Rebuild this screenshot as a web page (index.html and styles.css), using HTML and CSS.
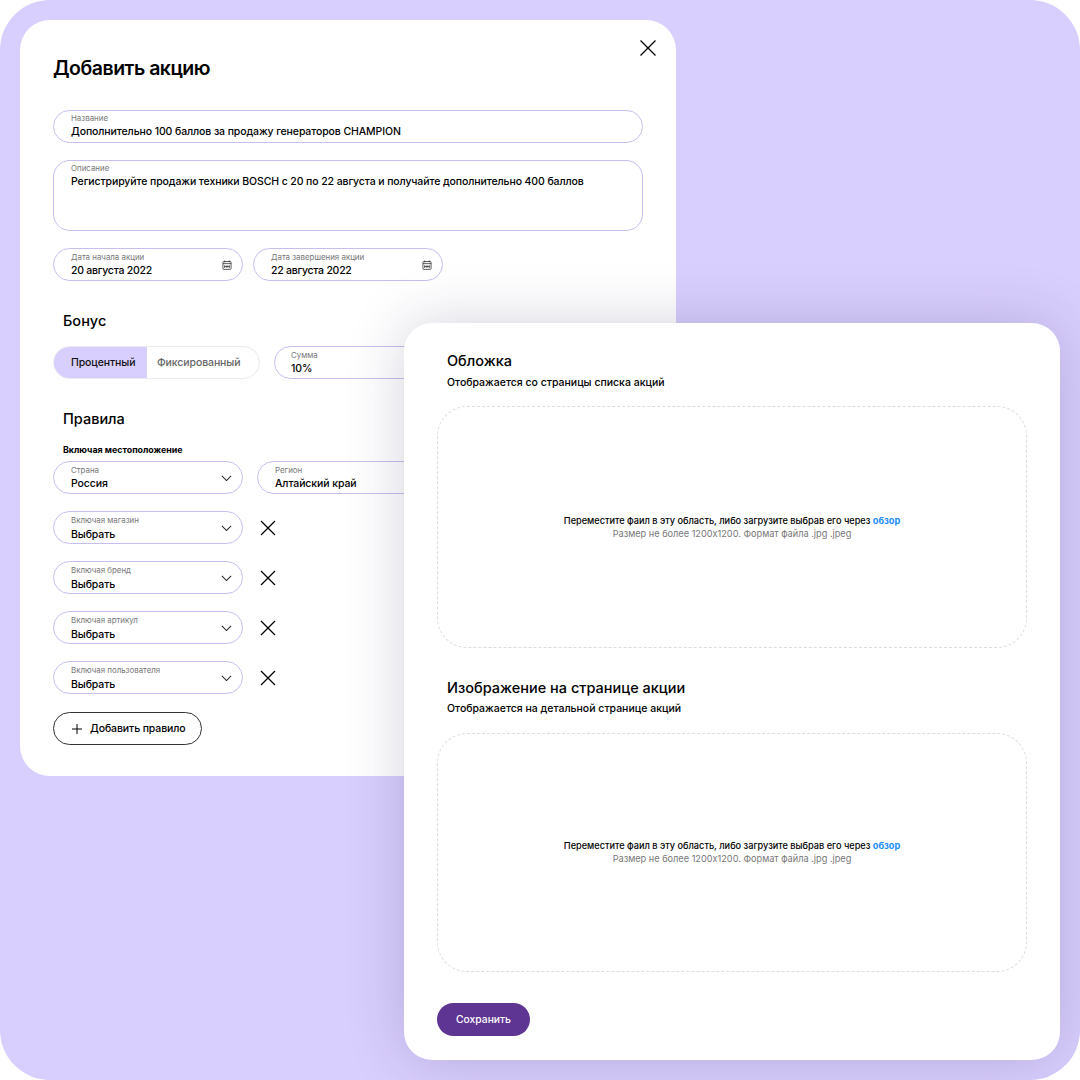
FILE: index.html
```html
<!DOCTYPE html>
<html lang="ru">
<head>
  <meta charset="UTF-8" />
  <title>Добавить акцию</title>
  <link rel="stylesheet" href="styles.css">
</head>
<body>
  <div class="frame">

    <div class="card card-main">
      <svg class="close-btn" width="18" height="18" viewBox="0 0 18 18"><path d="M1.5 1.5l15 15M16.500 1.500l-15 15"/></svg>
      <h1 class="title">Добавить акцию</h1>

      <div class="field field-wide">
        <span class="field-label">Название</span>
        <span class="field-value">Дополнительно 100 баллов за продажу генераторов CHAMPION</span>
      </div>
      <div class="field field-wide field-area">
        <span class="field-label">Описание</span>
        <span class="field-value">Регистрируйте продажи техники BOSCH с 20 по 22 августа и получайте дополнительно 400 баллов</span>
      </div>
      <div class="row row-dates">
        <div class="field">
          <span class="field-label">Дата начала акции</span>
          <span class="field-value">20 августа 2022</span>
          <svg class="calendar" width="10" height="10" viewBox="0 0 11 11"><rect x="1" y="1.700" width="9" height="8.600" rx="1"/><path d="M1 4h9M3 .6v2M8 .6v2M3 5.700v3M5.500 5.700v3M8 5.700v3M2.500 7.200h6"/></svg>
        </div>
        <div class="field">
          <span class="field-label">Дата завершения акции</span>
          <span class="field-value">22 августа 2022</span>
          <svg class="calendar" width="10" height="10" viewBox="0 0 11 11"><rect x="1" y="1.700" width="9" height="8.600" rx="1"/><path d="M1 4h9M3 .6v2M8 .6v2M3 5.700v3M5.500 5.700v3M8 5.700v3M2.500 7.200h6"/></svg>
        </div>
      </div>

      <h2 class="section-title">Бонус</h2>
      <div class="row row-bonus">
        <div class="toggle">
          <span class="toggle-item active">Процентный</span>
          <span class="toggle-item">Фиксированный</span>
        </div>
        <div class="field">
          <span class="field-label">Сумма</span>
          <span class="field-value">10%</span>
        </div>
      </div>

      <h2 class="section-title">Правила</h2>
      <div class="sub-title">Включая местоположение</div>
      <div class="row row-location">
        <div class="field">
          <span class="field-label">Страна</span>
          <span class="field-value">Россия</span>
          <svg class="chevron" width="11" height="6.500" viewBox="0 0 12 7"><path d="M1 1l5 5 5-5"/></svg>
        </div>
        <div class="field">
          <span class="field-label">Регион</span>
          <span class="field-value">Алтайский край</span>
          <svg class="chevron" width="11" height="6.500" viewBox="0 0 12 7"><path d="M1 1l5 5 5-5"/></svg>
        </div>
      </div>

      <div class="row rule">
        <div class="field">
          <span class="field-label">Включая магазин</span>
          <span class="field-value">Выбрать</span>
          <svg class="chevron" width="11" height="6.500" viewBox="0 0 12 7"><path d="M1 1l5 5 5-5"/></svg>
        </div>
        <svg class="remove" width="16" height="16" viewBox="0 0 16 16"><path d="M1 1l14 14M15 1L1 15"/></svg>
      </div>
      <div class="row rule">
        <div class="field">
          <span class="field-label">Включая бренд</span>
          <span class="field-value">Выбрать</span>
          <svg class="chevron" width="11" height="6.500" viewBox="0 0 12 7"><path d="M1 1l5 5 5-5"/></svg>
        </div>
        <svg class="remove" width="16" height="16" viewBox="0 0 16 16"><path d="M1 1l14 14M15 1L1 15"/></svg>
      </div>
      <div class="row rule">
        <div class="field">
          <span class="field-label">Включая артикул</span>
          <span class="field-value">Выбрать</span>
          <svg class="chevron" width="11" height="6.500" viewBox="0 0 12 7"><path d="M1 1l5 5 5-5"/></svg>
        </div>
        <svg class="remove" width="16" height="16" viewBox="0 0 16 16"><path d="M1 1l14 14M15 1L1 15"/></svg>
      </div>
      <div class="row rule">
        <div class="field">
          <span class="field-label">Включая пользователя</span>
          <span class="field-value">Выбрать</span>
          <svg class="chevron" width="11" height="6.500" viewBox="0 0 12 7"><path d="M1 1l5 5 5-5"/></svg>
        </div>
        <svg class="remove" width="16" height="16" viewBox="0 0 16 16"><path d="M1 1l14 14M15 1L1 15"/></svg>
      </div>

      <button class="add-btn">
        <svg width="10" height="10" viewBox="0 0 10 10"><path d="M5 0v10M0 5h10"/></svg>
        Добавить правило
      </button>
    </div>

    <div class="card card-upload">
      <h2 class="upload-title">Обложка</h2>
      <p class="upload-sub">Отображается со страницы списка акций</p>
      <div class="dropzone dropzone-cover">
        <p class="drop-text">Переместите фаил в эту область, либо загрузите выбрав его через <a class="drop-link">обзор</a></p>
        <p class="drop-hint">Размер не более 1200x1200. Формат файла .jpg .jpeg</p>
      </div>

      <h2 class="upload-title upload-title-next">Изображение на странице акции</h2>
      <p class="upload-sub">Отображается на детальной странице акций</p>
      <div class="dropzone dropzone-page">
        <p class="drop-text">Переместите фаил в эту область, либо загрузите выбрав его через <a class="drop-link">обзор</a></p>
        <p class="drop-hint">Размер не более 1200x1200. Формат файла .jpg .jpeg</p>
      </div>

      <button class="save-btn">Сохранить</button>
    </div>

  </div>
</body>
</html>
```

FILE: styles.css
```css
* {
  box-sizing: border-box;
}

body {
  margin: 0;
  background: #fff;
  font-family: "Inter", "Liberation Sans", sans-serif;
  color: #000;
}

.frame {
  position: relative;
  width: 1080px;
  height: 1080px;
  border-radius: 50px;
  background: #d9cffe;
  overflow: hidden;
}

.card {
  position: absolute;
  background: #fff;
}

.card-main {
  left: 20px;
  top: 20px;
  width: 656px;
  height: 756px;
  padding: 34px 33px;
  border-radius: 30px;
}

.card-upload {
  left: 404px;
  top: 323px;
  width: 656px;
  height: 737px;
  padding: 28px 33px;
  border-radius: 28px;
  box-shadow: 0 0 60px rgba(40, 30, 80, 0.2);
}

.close-btn {
  position: absolute;
  top: 19px;
  right: 19px;
}

.close-btn path,
.remove path {
  fill: none;
  stroke: #000;
  stroke-width: 1.3;
}

.title {
  margin: 0 0 28px;
  font-size: 19.500px;
  line-height: 28px;
  font-weight: 600;
  letter-spacing: -0.5px;
}

.field {
  position: relative;
  display: flex;
  flex-direction: column;
  width: 190px;
  height: 33px;
  flex-shrink: 0;
  padding: 3px 17px 0;
  border: 1px solid #c8bdf0;
  border-radius: 17px;
  background: #fff;
}

.field-wide {
  width: 590px;
  margin-bottom: 17px;
  padding-top: 2px;
}

.field-area {
  height: 71px;
  border-radius: 17px;
}

.field-label {
  font-size: 7.900px;
  line-height: 10px;
  color: #777;
}

.field-value {
  margin-top: 2px;
  font-size: 10.500px;
  line-height: 14px;
  font-weight: 500;
  letter-spacing: -0.1px;
  white-space: nowrap;
}

.row-dates .field-value {
  letter-spacing: -0.25px;
}

.rule .field-value {
  margin-top: 3px;
}

.calendar {
  position: absolute;
  right: 10px;
  top: 11px;
}

.calendar rect,
.calendar path {
  fill: none;
  stroke: #222;
  stroke-width: 0.8;
}

.chevron {
  position: absolute;
  right: 10px;
  top: 12.500px;
}

.chevron path {
  fill: none;
  stroke: #222;
  stroke-width: 1.1;
}

.row {
  display: flex;
  align-items: center;
  gap: 10px;
}

.row-bonus {
  gap: 14px;
}

.row-bonus .field {
  padding-left: 16px;
}

.row-location {
  gap: 14px;
  margin-top: 5px;
}

.rule {
  gap: 17px;
  margin-top: 17px;
}

.section-title {
  margin: 30px 0 15px 10px;
  font-size: 14.500px;
  line-height: 20px;
  font-weight: 500;
}

.section-title + .sub-title {
  margin-top: 15px;
}

.sub-title {
  margin-left: 10px;
  font-size: 8.850px;
  line-height: 12px;
  font-weight: 700;
}

.toggle {
  display: flex;
  width: 207px;
  height: 33px;
  border: 1px solid #e9e9ee;
  border-radius: 17px;
  overflow: hidden;
}

.toggle-item {
  display: flex;
  align-items: center;
  flex: 1;
  padding-left: 10px;
  font-size: 10.500px;
  font-weight: 500;
  letter-spacing: -0.1px;
  color: #666;
}

.toggle-item.active {
  flex: 0 0 93px;
  padding-left: 17px;
  background: #d9cffe;
  color: #111;
}

.add-btn {
  display: flex;
  align-items: center;
  gap: 8px;
  width: 149px;
  height: 33px;
  margin-top: 18px;
  padding: 0 0 0 18px;
  border: 1px solid #333;
  border-radius: 17px;
  background: #fff;
  font-family: inherit;
  font-size: 10.500px;
  font-weight: 500;
  letter-spacing: -0.1px;
  color: #000;
}

.add-btn path {
  fill: none;
  stroke: #000;
  stroke-width: 1;
}

.upload-title {
  margin: 0 0 5px 10px;
  font-size: 14.500px;
  line-height: 20px;
  font-weight: 500;
}

.upload-title-next {
  margin-top: 30px;
  margin-bottom: 4px;
}

.upload-sub {
  margin: 0 0 16px 10px;
  font-size: 10.500px;
  line-height: 14px;
  font-weight: 500;
}

.dropzone {
  display: flex;
  flex-direction: column;
  align-items: center;
  justify-content: center;
  width: 590px;
  border: 1px dashed #dcdcdc;
  border-radius: 30px;
  text-align: center;
}

.dropzone-cover {
  height: 242px;
}

.dropzone-page {
  height: 239px;
  margin-top: 17px;
  padding-bottom: 2px;
}

.drop-text,
.drop-hint {
  margin: 0;
  font-size: 9.180px;
  line-height: 13px;
}

.drop-text {
  font-weight: 500;
}

.drop-hint {
  color: #777;
}

.drop-link {
  font-weight: 700;
  color: #1a8cff;
}

.save-btn {
  display: block;
  width: 93px;
  height: 33px;
  margin-top: 31px;
  padding: 0 0 2px;
  border: none;
  border-radius: 17px;
  background: #5f3594;
  font-family: inherit;
  font-size: 10.300px;
  font-weight: 500;
  color: #fff;
}
```
